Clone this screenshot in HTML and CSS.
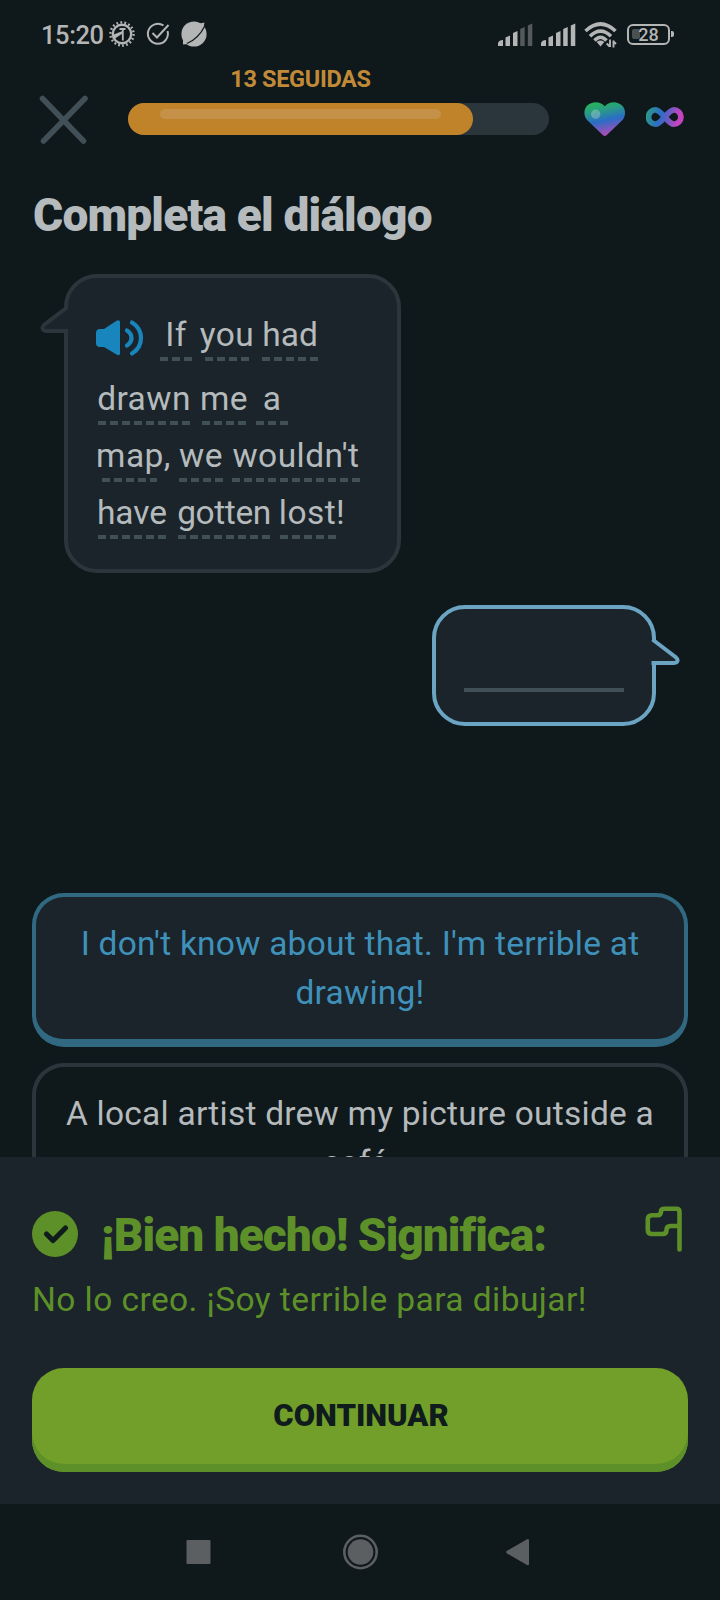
FILE: index.html
```html
<!DOCTYPE html>
<html lang="es">
<head>
<meta charset="utf-8">
<title>Completa el diálogo</title>
<link rel="stylesheet" href="styles.css">
</head>
<body>
<div class="screen">
  <header class="status">
    <span class="time">15:20</span>
    <svg class="gear" width="26" height="26" viewBox="0 0 26 26" fill="none" stroke="currentColor">
      <circle cx="13" cy="13" r="11.6" stroke-width="2.4" stroke-dasharray="1.8 2.25"/>
      <circle cx="13" cy="13" r="9.2" stroke-width="2.4"/>
      <path d="M10.500 8H16.500M13.800 8v11.500" stroke-width="1.800"/>
      <path d="M3.500 14l10-4v2.500L6 17.500Z" fill="currentColor" stroke="none"/>
    </svg>
    <svg class="tick" width="24" height="24" viewBox="0 0 24 24" fill="none" stroke="currentColor" stroke-width="2">
      <path d="M17.500 3.500A10 10 0 1 0 21.500 9"/>
      <path d="M6.500 11l4.500 4.500L22.500 3"/>
    </svg>
    <svg class="planet" width="26" height="26" viewBox="0 0 26 26">
      <circle cx="13" cy="13" r="12.600" fill="currentColor"/>
      <path d="M19 2.500L23.500 1.500l-1 5ZM2 18v5.500l5-.5Z" fill="currentColor"/>
      <path d="M6 22.500C13 19.500 20 12.500 23.500 5.500" fill="none" stroke="#0f181b" stroke-width="1.300"/>
    </svg>
    <svg class="signal" width="35" height="24" viewBox="0 0 35 24" fill="currentColor">
      <path d="M0 23v-3q1-3 5-3v6ZM7.500 23V14.500l4.500-2V23ZM15 23V10l4.500-2V23Z"/>
      <path d="M22.200 23V6l4.500-2V23ZM29.800 23V2.500l4.500-2V23Z" opacity=".42"/>
    </svg>
    <svg class="signal-full" width="35" height="24" viewBox="0 0 35 24" fill="currentColor">
      <path d="M0 23v-3q1-3 5-3v6ZM7.500 23V14.500l4.500-2V23ZM15 23V10l4.500-2V23ZM22.200 23V6l4.500-2V23ZM29.800 23V2.500l4.500-2V23Z"/>
    </svg>
    <svg class="wifi" width="34" height="28" viewBox="0 0 34 28" fill="none" stroke="currentColor" stroke-width="3.600">
      <path d="M1.500 10Q16.500-4 31.500 10M6 15.200Q16.500 5 27 15.200M10.500 19.500Q16.500 13 22.500 19.500"/>
      <path d="M12.700 21q3.800-2.800 7.600 0l-3.800 4.500Z" fill="currentColor" stroke="none"/>
      <path d="M26 18.500v7.500M22.700 22.500l3 3M29.500 26.500v-7M29 20l3 3" stroke-width="1.900"/>
    </svg>
    <div class="battery"><span class="charge"></span><span class="level">28</span></div>
  </header>

  <section class="lesson-bar">
    <svg class="close" width="50" height="50" viewBox="0 0 50 50" stroke="#414f56" stroke-width="5.600" stroke-linecap="round">
      <path d="M3.500 3.500L44.500 46M46 3.500L4.500 46"/>
    </svg>
    <div class="streak">
      <span class="streak-label">13 SEGUIDAS</span>
      <div class="track"><div class="fill"><div class="shine"></div></div></div>
    </div>
    <svg class="heart" width="42" height="35" viewBox="0 0 42 35">
      <defs><linearGradient id="hg" x1=".3" y1="0" x2=".55" y2="1">
        <stop offset="0" stop-color="#26b45a"/><stop offset=".25" stop-color="#2a9b85"/><stop offset=".55" stop-color="#2a6dc6"/><stop offset="1" stop-color="#b84ab4"/>
      </linearGradient></defs>
      <path d="M18.800 33L3.500 18.500C-.5 14.500-.5 7.500 3 3.800C8-1 16-1 20.800 4.300C25.500-1 33.500-1 38.300 3.800C42 7.500 42 14.500 38 18.500L22.800 33Q20.800 35 18.800 33Z" fill="url(#hg)"/>
      <circle cx="11.700" cy="12.300" r="4.700" fill="#fff" opacity=".25"/>
    </svg>
    <svg class="infinity" width="38" height="22" viewBox="0 0 38 22">
      <defs><linearGradient id="ig" gradientUnits="userSpaceOnUse" x1="0" y1="4" x2="38" y2="14">
        <stop offset="0" stop-color="#2b9c84"/><stop offset=".38" stop-color="#2c6dc4"/><stop offset=".55" stop-color="#5a5fc4"/><stop offset=".85" stop-color="#c444c0"/>
      </linearGradient></defs>
      <path d="M18.700 11C14 5.500 12 3.800 9.500 3.800A7 7.200 0 0 0 9.500 18.200C12 18.200 14 16.500 18.700 11C23.400 5.500 25.400 3.800 27.900 3.800A7 7.200 0 0 1 27.900 18.200C25.400 18.200 23.400 16.500 18.700 11Z" fill="none" stroke="url(#ig)" stroke-width="5.800"/>
    </svg>
  </section>

  <main class="exercise">
    <h1 class="title">Completa el diálogo</h1>

    <div class="bubble prompt">
      <svg class="tail tail-left" width="32" height="30" viewBox="0 0 32 30">
        <path d="M28 3L5 19.500C1 23 3 26 7 26H32V3Z" fill="#1a242a"/>
        <path d="M27 2.500L4.500 19.500C.5 23 3 26 7 26H28" fill="none" stroke="#2b363c" stroke-width="4"/>
      </svg>
      <div class="line line-first">
        <svg class="speaker" width="48" height="38" viewBox="0 0 48 38" fill="none" stroke="#1985bd" stroke-width="4.300" stroke-linecap="round">
          <path d="M0 14Q0 10 4 10H8L20.500 1.700Q24 .2 24 3V34.500Q24 37.300 20.500 35.500L8 28H4Q0 28 0 24Z" fill="#1985bd" stroke="none"/>
          <path d="M31 11.500Q35.500 14.500 35.500 19T31 26.500M36 3.500Q45 9 45 19T36 34.500"/>
        </svg>
        <span class="word w-if">If<i></i></span><span class="word w-you">you<i></i></span><span class="word w-had">had<i></i></span>
      </div>
      <div class="line"><span class="word w-drawn">drawn<i></i></span><span class="word w-me">me<i></i></span><span class="word w-a">a<i></i></span></div>
      <div class="line"><span class="word w-map">map,<i></i></span><span class="word w-we">we<i></i></span><span class="word w-wouldnt">wouldn't<i></i></span></div>
      <div class="line"><span class="word w-have">have<i></i></span><span class="word w-gotten">gotten<i></i></span><span class="word w-lost">lost!<i></i></span></div>
    </div>

    <div class="bubble reply">
      <svg class="tail tail-right" width="32" height="30" viewBox="0 0 32 30">
        <path d="M3 3L27 19.500C31 23 29 26 25 26H0V3Z" fill="#1a242a"/>
        <path d="M4.500 2.500L27.500 20C31.500 23.500 29 26 25.500 26H3.500" fill="none" stroke="#6ba5c3" stroke-width="4"/>
      </svg>
      <div class="blank"></div>
    </div>

    <div class="choices">
      <div class="choice selected">I don't know about that. I'm terrible at<br>drawing!</div>
      <div class="choice">A local artist drew my picture outside a<br>café.</div>
    </div>
  </main>

  <section class="result">
    <div class="result-head">
      <svg class="check" width="46" height="46" viewBox="0 0 46 46">
        <circle cx="23" cy="23" r="23" fill="#5d9028"/>
        <path d="M14.500 23L21 29.500L33.500 17" fill="none" stroke="#0f1b1c" stroke-width="5.200" stroke-linecap="round" stroke-linejoin="round"/>
      </svg>
      <h2 class="result-title">¡Bien hecho! Significa:</h2>
      <svg class="flag" width="38" height="46" viewBox="0 0 38 46" fill="none" stroke="#5d9028" stroke-width="4.600" stroke-linecap="round" stroke-linejoin="round">
        <path d="M34.500 43.500V6Q34.500 2.800 31.500 2.800H19.500Q16 2.800 16 5.500Q16 9.200 12.500 9.200H7Q2.800 9.200 2.800 13V24Q2.800 28 7 28H17.500Q21.500 28 21.500 24Q21.500 20 25.500 20H34"/>
      </svg>
    </div>
    <p class="meaning">No lo creo. ¡Soy terrible para dibujar!</p>
    <button class="continue">CONTINUAR</button>
  </section>

  <nav class="nav">
    <svg width="344" height="38" viewBox="0 0 344 38" fill="#5b5f61">
      <rect x="0.500" y="7" width="24" height="24" rx="1"/>
      <circle cx="174.500" cy="19" r="12.800"/>
      <circle cx="174.500" cy="19" r="16.200" fill="none" stroke="#5b5f61" stroke-width="2.600"/>
      <path d="M321 17.800L341 6.200Q343 5.500 343 7.500V31Q343 32.700 341 32L321 20.400Q319.500 19 321 17.800Z"/>
    </svg>
  </nav>
</div>
</body>
</html>
```
FILE: styles.css
```css
* { box-sizing: border-box; }
body {
  margin: 0;
  background: #0f181b;
  color: #b5babc;
  font-family: Roboto, "Noto Sans", sans-serif;
}
.screen {
  display: flex;
  flex-direction: column;
  width: 720px;
  height: 1600px;
  overflow: hidden;
}

/* Status bar */
.status {
  display: flex;
  align-items: flex-start;
  height: 60px;
  padding: 0 46px 0 41px;
  color: #b4b5b5;
}
.status svg { flex: none; }
.time {
  width: 63px;
  margin-top: 20px;
  font-size: 25.5px;
  font-weight: 500;
  line-height: 30px;
  letter-spacing: -0.4px;
  white-space: nowrap;
}
.gear { margin: 21px 0 0 5px; }
.tick { margin: 22px 0 0 11px; }
.planet { margin: 21px 0 0 11px; }
.signal { margin: 23px 0 0 291px; }
.signal-full { margin: 23px 0 0 8px; }
.wifi { margin: 21px 0 0 8px; }
.battery {
  position: relative;
  flex: none;
  width: 43px;
  height: 21px;
  margin: 23.500px 0 0 9px;
  border: 2.500px solid;
  border-radius: 6px;
}
.battery::after {
  content: "";
  position: absolute;
  right: -6px;
  top: 5px;
  width: 3px;
  height: 6px;
  border-radius: 0 2px 2px 0;
  background: #b4b5b5;
}
.charge {
  position: absolute;
  left: 3px;
  top: 3px;
  width: 8px;
  height: 10px;
  border-radius: 2px;
  background: #4b5051;
}
.level {
  position: relative;
  display: block;
  font-size: 18px;
  font-weight: 500;
  line-height: 17px;
  text-align: center;
}

/* Lesson progress */
.lesson-bar {
  display: flex;
  align-items: flex-start;
  height: 125px;
  padding-left: 39px;
}
.close { margin-top: 35px; }
.streak { width: 421px; margin-left: 39px; }
.streak-label {
  display: block;
  width: 345px;
  height: 43px;
  padding-top: 5px;
  color: #c18a38;
  font-size: 23.500px;
  font-weight: 700;
  line-height: 28px;
  letter-spacing: -0.350px;
  text-align: center;
}
.track { height: 32px; border-radius: 16px; background: #2b363c; }
.fill {
  width: 345px;
  height: 32px;
  padding: 6px 32px;
  border-radius: 16px;
  background: #c18329;
}
.shine { height: 10px; border-radius: 5px; background: #c59149; }
.heart { margin: 42px 0 0 35px; }
.infinity { margin: 46px 0 0 20px; }

/* Dialogue */
.exercise { flex: 1; min-height: 0; overflow: hidden; }
.title {
  margin: 0 0 29px 33px;
  font-size: 46px;
  font-weight: 900;
  line-height: 60px;
  letter-spacing: -0.800px;
}
.bubble {
  position: relative;
  border: 4px solid #2b363c;
  border-radius: 33px;
  background: #1a242a;
}
.prompt {
  display: flex;
  flex-direction: column;
  gap: 9px;
  width: 337px;
  height: 299px;
  margin-left: 64px;
  padding: 35px 0 0 30px;
}
.tail { position: absolute; }
.tail-left { left: -28px; top: 27px; }
.tail-right { right: -28px; top: 28px; }
.line { display: flex; }
.line-first { margin-bottom: 7px; }
.speaker { flex: none; margin: 6px 0 0 -2px; }
.word {
  display: flex;
  flex-direction: column;
  align-items: center;
  font-size: 33.500px;
  line-height: 44px;
  letter-spacing: 0.450px;
  white-space: nowrap;
}
.word i {
  align-self: stretch;
  height: 4px;
  background: repeating-linear-gradient(90deg, #414f56 0 8px, transparent 8px 12px);
}
.w-if { width: 32px; margin-left: 16px; }
.w-you { width: 44px; margin-left: 13px; }
.w-had { width: 56px; margin-left: 13px; letter-spacing: 0; }
.w-drawn { width: 92px; }
.w-me { width: 44px; margin-left: 12px; }
.w-a { width: 32px; margin-left: 10px; }
.w-map { width: 71px; }
.w-map i { margin-left: 4px; margin-right: 12px; }
.w-we { width: 44px; margin-left: 10px; }
.w-wouldnt { width: 128px; margin-left: 9px; }
.w-have { width: 68px; letter-spacing: 0; }
.w-gotten { width: 92px; margin-left: 12px; letter-spacing: -0.400px; }
.w-lost { width: 64px; margin-left: 10px; }
.w-lost i { margin-right: 8px; }
.reply {
  width: 224px;
  height: 121px;
  margin: 32px 0 0 432px;
  padding: 79px 28px 0;
  border-color: #6ba5c3;
}
.blank { height: 4px; background: #414f56; }

/* Answers */
.choices {
  display: grid;
  gap: 16px;
  margin: 167px 32px 0;
}
.choice {
  height: 154px;
  padding: 22px 0;
  border: 4px solid #2b363c;
  border-bottom-width: 8px;
  border-radius: 32px;
  font-size: 33.500px;
  line-height: 49px;
  letter-spacing: 0.240px;
  text-align: center;
  white-space: nowrap;
}
.selected {
  border-color: #316982;
  background: #1a242a;
  color: #3f91ba;
}

/* Result sheet */
.result {
  height: 347px;
  padding: 48px 32px 32px;
  background: #1a242a;
  color: #5d9028;
}
.result-head { display: flex; height: 60px; }
.check { flex: none; margin-top: 6px; }
.result-title {
  flex: 1;
  margin: 0 0 0 23px;
  font-size: 46px;
  font-weight: 900;
  line-height: 60px;
  letter-spacing: -0.980px;
  white-space: nowrap;
}
.flag { flex: none; margin: 1px 5px 0 0; }
.meaning {
  margin: 10px 0 44px;
  font-size: 33.500px;
  line-height: 49px;
  letter-spacing: 0.430px;
  white-space: nowrap;
}
.continue {
  display: block;
  width: 100%;
  height: 104px;
  padding: 0 0 8px 2px;
  border: 0;
  border-radius: 32px;
  background: #719f29;
  box-shadow: inset 0 -8px #5d9028;
  color: #0f1b1c;
  font: 900 31px/96px Roboto, "Noto Sans", sans-serif;
}

/* System navigation */
.nav { height: 96px; padding: 29px 0 0 186px; }
.nav svg { display: block; }
```
